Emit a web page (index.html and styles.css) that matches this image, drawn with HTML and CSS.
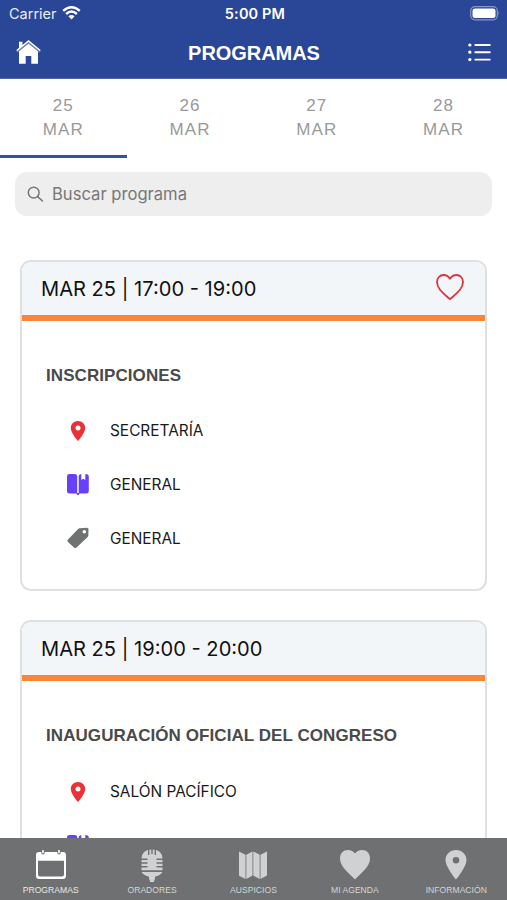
FILE: index.html
```html
<!DOCTYPE html>
<html lang="es">
<head>
<meta charset="utf-8">
<title>Programas</title>
<link rel="stylesheet" href="styles.css">
</head>
<body>
<svg width="0" height="0" class="defs">
  <symbol id="pin" viewBox="0 0 16 22"><path fill-rule="evenodd" d="M8 1C3.900 1 .8 4 .8 8c0 5 7.200 13 7.200 13s7.200-8 7.200-13c0-4-3.100-7-7.200-7zm0 4.500a2.500 2.500 0 1 1 0 5 2.500 2.500 0 0 1 0-5z"/></symbol>
  <symbol id="book" viewBox="0 0 22 22"><path d="M2.500 0H7.500Q10.200 0 10.200 2V19.600H2.500Q0 19.600 0 17.300V2.300Q0 0 2.500 0zM11.700 2Q11.700 .3 14.300 0V6L16.300 4.800 18.300 6V0Q21.800 .1 21.800 2.500V17.300Q21.800 19.600 19.300 19.600H11.700zM9 19h4q-.6.700-1 1.500-1 1.600-2 0Q9.600 19.700 9 19z"/></symbol>
  <symbol id="tag" viewBox="0 0 22 22"><path fill-rule="evenodd" d="M12.500 1.200 20 .8q1.500 0 1.500 1.500L21.300 8.500q0 .9-.6 1.500L9.500 20.500q-1.300 1.200-2.500 0L1 14.900q-1.200-1.200 0-2.400L11.100 1.900q.6-.6 1.400-.7zM17.300 3a1.800 1.800 0 1 0 0 3.600 1.800 1.800 0 0 0 0-3.600z"/></symbol>
</svg>
<div class="app">
  <header class="header">
    <div class="status">
      <div class="carrier"><span>Carrier</span>
        <svg width="19" height="14" viewBox="0 0 19 14" fill="none" stroke="#fff" stroke-width="2.400"><path d="M1.200 4.900Q9.500-2.300 17.800 4.900M4.100 8Q9.500 3.200 14.900 8"/><path d="M6.400 10.300Q9.500 7.900 12.600 10.300L9.500 13.500z" fill="#fff" stroke="none"/></svg>
      </div>
      <span class="clock">5:00 PM</span>
      <svg class="battery" width="31" height="15" viewBox="0 0 31 15"><rect x=".7" y=".7" width="26.600" height="13.100" rx="4.200" fill="none" stroke="#8796c7" stroke-width="1.200"/><rect x="2.500" y="2.500" width="23" height="9.500" rx="2.500" fill="#fff"/><path d="M28.500 5q1.800 2.200 0 4.500z" fill="#8796c7"/></svg>
    </div>
    <div class="titlebar">
      <svg width="25" height="25" viewBox="0 0 25 25" fill="#fff"><path d="M3 1.800h3.500v4L3 8.600zM12.500 3.200 22 11V23.800H15.300V16H9.700v7.800H3V11z"/><path d="M.8 11.700 12.500 2.500l11.700 9.200" fill="none" stroke="#7185bc" stroke-width="2"/><path d="M.8 10.500 12.500 1l11.700 9.500" fill="none" stroke="#fff" stroke-width="1.500"/></svg>
      <h1>PROGRAMAS</h1>
      <svg width="23" height="19" viewBox="0 0 23 19" fill="none" stroke="#fff" stroke-width="1.900" stroke-linecap="round"><path d="M7.300 2h14.500M7.300 9.200h14.500M7.300 16.600h14.500"/><path d="M1.800 2h.1M1.800 9.200h.1M1.800 16.600h.1" stroke-width="3.200"/></svg>
    </div>
  </header>
  <nav class="tabs">
    <div class="tab active">25<br>MAR</div><div class="tab">26<br>MAR</div><div class="tab">27<br>MAR</div><div class="tab">28<br>MAR</div>
  </nav>
  <main class="content">
    <div class="search">
      <svg width="17" height="17" viewBox="0 0 17 17" fill="none" stroke="#777" stroke-width="1.500" stroke-linecap="round"><circle cx="6.700" cy="6.600" r="5.400"/><path d="m10.700 10.600 4.700 4.400"/></svg>
      <span>Buscar programa</span>
    </div>
    <article class="card">
      <div class="card-head"><span>MAR 25 | 17:00 - 19:00</span>
        <svg width="30" height="28" viewBox="0 0 30 28" fill="none" stroke="#dc3540" stroke-width="1.800" stroke-linejoin="round"><path d="M15 5.800C13.500 3.300 11.300 2 8.600 2 4.700 2 2 5 2 9c0 7.200 7.500 12.200 13 17.200C20.500 21.200 28 16.200 28 9c0-4-2.700-7-6.600-7-2.700 0-4.900 1.300-6.400 3.800z"/></svg>
      </div>
      <div class="card-body">
        <h2>INSCRIPCIONES</h2>
        <ul>
          <li><span class="icon red"><svg width="16" height="22"><use href="#pin"/></svg></span><span>SECRETARÍA</span></li>
          <li><span class="icon purple"><svg width="22" height="22"><use href="#book"/></svg></span><span>GENERAL</span></li>
          <li><span class="icon gray"><svg width="22" height="22"><use href="#tag"/></svg></span><span>GENERAL</span></li>
        </ul>
      </div>
    </article>
    <article class="card">
      <div class="card-head"><span>MAR 25 | 19:00 - 20:00</span></div>
      <div class="card-body">
        <h2>INAUGURACIÓN OFICIAL DEL CONGRESO</h2>
        <ul>
          <li><span class="icon red"><svg width="16" height="22"><use href="#pin"/></svg></span><span>SALÓN PACÍFICO</span></li>
          <li><span class="icon purple"><svg width="22" height="22"><use href="#book"/></svg></span></li>
        </ul>
      </div>
    </article>
  </main>
  <footer class="bottom">
    <a class="item on"><svg width="32" height="32" viewBox="0 0 32 32"><path fill-rule="evenodd" d="M4 3h2.500a1.700 1.700 0 1 0 3 0h13a1.700 1.700 0 1 0 3 0H28q3 0 3 3V27q0 3-3 3H4q-3 0-3-3V6q0-3 3-3zM3 11.800V25.500q0 2 2 2h22q2 0 2-2V11.800z"/><path d="M7.200 1h1.600v3.300H7.200zM23.200 1h1.600v3.300h-1.600z"/></svg><span>PROGRAMAS</span></a>
    <a class="item"><svg width="32" height="34" viewBox="0 0 32 34"><path d="M5.500 10Q5.500.5 16 .5T26.500 10v11.500h-21zM5.500 22.800h21Q25.500 26 19 27.700V30q-1 1-1 3h-4q0-2-1-3v-2.300Q6.500 26 5.500 22.800z"/><path d="M12.700 0v6M16 0v5M19.300 0v6M5 10.300h6.500M5 14h6.500M5 17.700h6.500M20.500 10.300H27M20.500 14H27M20.500 17.700H27M5 22.200h22" stroke="#6e7071" stroke-width="1.400" fill="none"/></svg><span>ORADORES</span></a>
    <a class="item"><svg width="32" height="32" viewBox="0 0 32 32"><path d="m2 2.500 6.500 3.200V30L2 26.800zM9.300 5.700 15.500 2.500v24L9.300 30zM16.300 2.500l6.400 3.200V30l-6.400-3.500zM23.500 5.700 30 2.500v24L23.500 30z"/></svg><span>AUSPICIOS</span></a>
    <a class="item"><svg width="32" height="32" viewBox="0 0 32 32"><path d="M16 4.500C14.300 2.200 12 1 9 1 4.300 1 1 4.500 1 9.200 1 18 9.500 23.500 16 30.500 22.500 23.500 31 18 31 9.200 31 4.500 27.700 1 23 1c-3 0-5.300 1.200-7 3.500z"/></svg><span>MI AGENDA</span></a>
    <a class="item"><svg width="32" height="32" viewBox="0 0 32 32"><path fill-rule="evenodd" d="M16 1C10 1 5.500 5.500 5.500 11c0 7 10.500 19.500 10.500 19.500S26.500 18 26.500 11C26.500 5.500 22 1 16 1zm0 7a3.300 3.300 0 1 1 0 6.600A3.300 3.300 0 0 1 16 8z"/></svg><span>INFORMACIÓN</span></a>
  </footer>
</div>
</body>
</html>
```
FILE: styles.css
```css
* { box-sizing: border-box; }
body { margin: 0; background: #fff; font-family: Inter, "Liberation Sans", sans-serif; }
svg { display: block; flex-shrink: 0; }
.defs { position: absolute; }
.app { width: 507px; height: 900px; display: flex; flex-direction: column; overflow: hidden; }
.header { height: 79px; flex-shrink: 0; background: #2a4696; color: #fff; border-bottom: 1px solid #5269a9; }
.status { height: 27px; padding: 0 6px 0 9px; display: grid; grid-template-columns: 1fr auto 1fr; align-items: center; font-size: 14.500px; }
.carrier { display: flex; align-items: center; gap: 6px; margin-right: 3px; color: #e8edfa; }
.carrier svg { margin: -2px 0 0 -1px; }
.clock { font-weight: 600; letter-spacing: .15px; }
.battery { justify-self: end; }
.titlebar { height: 51px; padding: 0 16px; display: grid; grid-template-columns: 1fr auto 1fr; align-items: center; }
.titlebar svg:last-child { justify-self: end; }
h1 { margin: 1px 0 0 1px; font: bold 20px/24px "Liberation Sans", sans-serif; letter-spacing: -.05px; }
.tabs { height: 79px; flex-shrink: 0; display: grid; grid-template-columns: repeat(4, 1fr); }
.tab { padding-top: 15px; text-align: center; color: #999; font: 17px/24px "Liberation Sans", sans-serif; letter-spacing: 1.200px; }
.tab.active { border-bottom: 3px solid #3350a3; }
.content { flex: 1; min-height: 0; overflow: hidden; padding: 14px 15px 0 15px; }
.search { height: 44px; border-radius: 12px; background: #eee; display: flex; align-items: center; gap: 8px; padding-left: 12px; color: #777; font-size: 16.600px; }
.card { height: 331px; margin: 44px 5px 0; border: 2px solid #dfe0e2; border-radius: 11px; overflow: hidden; }
.card + .card { margin-top: 29px; }
.card-head { height: 59px; background: #f3f6f9; border-bottom: 6px solid #fd8538; display: flex; align-items: center; justify-content: space-between; padding: 0 20px 0 19px; font-size: 20.100px; color: #111; }
.card-head svg { margin-top: -4px; }
.card-body { padding: 43px 24px 0; }
h2 { margin: 0; font: bold 17px/24px "Liberation Sans", sans-serif; letter-spacing: .07px; color: #4a4a4a; white-space: nowrap; }
ul { list-style: none; margin: 15px 0 0; padding: 0; }
.card + .card ul { margin-top: 16px; }
li { height: 54px; display: flex; align-items: center; gap: 21px; padding-left: 21px; font-size: 15.400px; color: #1a1a1a; }
.icon { width: 22px; display: flex; justify-content: center; }
.red svg, .purple svg { margin-top: 2px; }
.red { fill: #e93137; }
.purple { fill: #6840fb; }
.gray { fill: #6f7172; }
.bottom { height: 62px; flex-shrink: 0; background: #6e7071; display: grid; grid-template-columns: repeat(5, 1fr); }
.item { display: flex; flex-direction: column; align-items: center; justify-content: space-between; padding: 11px 0 4px; color: #d5d6d7; fill: #d0d1d2; font: 8.600px/11px "Liberation Sans", sans-serif; }
.item svg { margin-bottom: -2px; }
.item.on { color: #e9e9e9; fill: #fff; }
```
